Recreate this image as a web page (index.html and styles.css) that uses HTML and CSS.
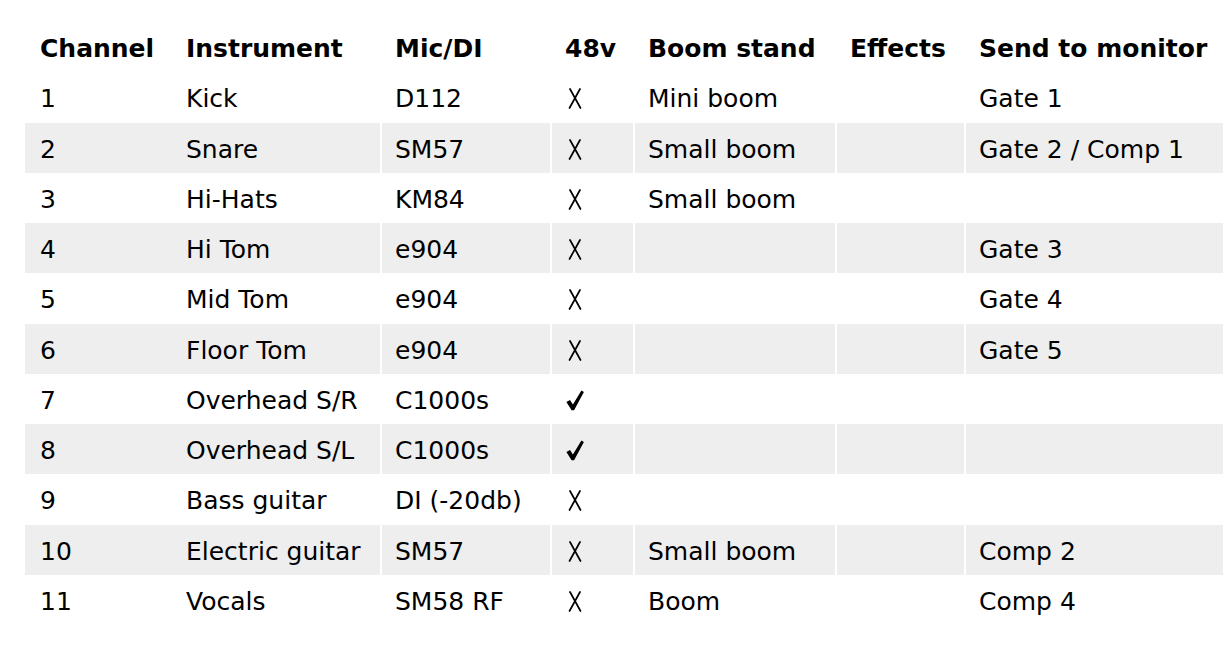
FILE: index.html
```html
<!DOCTYPE html>
<html>
<head>
<meta charset="utf-8">
<link rel="stylesheet" href="styles.css">
</head>
<body>
<div class="wrap">
<table class="channels">
  <colgroup>
    <col class="c1"><col class="c2"><col class="c3"><col class="c4"><col class="c5"><col class="c6"><col class="c7">
  </colgroup>
  <thead>
    <tr><th>Channel</th><th>Instrument</th><th>Mic/DI</th><th>48v</th><th>Boom stand</th><th>Effects</th><th>Send to monitor</th></tr>
  </thead>
  <tbody>
    <tr><td>1</td><td>Kick</td><td>D112</td><td class="mark"><svg class="no" viewBox="0 0 14 21" role="img" aria-label="no"><path d="M2 1 L12.5 20"/><path d="M12 1 L1.5 20"/></svg></td><td>Mini boom</td><td></td><td>Gate 1</td></tr>
    <tr><td>2</td><td>Snare</td><td>SM57</td><td class="mark"><svg class="no" viewBox="0 0 14 21" role="img" aria-label="no"><path d="M2 1 L12.5 20"/><path d="M12 1 L1.5 20"/></svg></td><td>Small boom</td><td></td><td>Gate 2 / Comp 1</td></tr>
    <tr><td>3</td><td>Hi-Hats</td><td>KM84</td><td class="mark"><svg class="no" viewBox="0 0 14 21" role="img" aria-label="no"><path d="M2 1 L12.5 20"/><path d="M12 1 L1.5 20"/></svg></td><td>Small boom</td><td></td><td></td></tr>
    <tr><td>4</td><td>Hi Tom</td><td>e904</td><td class="mark"><svg class="no" viewBox="0 0 14 21" role="img" aria-label="no"><path d="M2 1 L12.5 20"/><path d="M12 1 L1.5 20"/></svg></td><td></td><td></td><td>Gate 3</td></tr>
    <tr><td>5</td><td>Mid Tom</td><td>e904</td><td class="mark"><svg class="no" viewBox="0 0 14 21" role="img" aria-label="no"><path d="M2 1 L12.5 20"/><path d="M12 1 L1.5 20"/></svg></td><td></td><td></td><td>Gate 4</td></tr>
    <tr><td>6</td><td>Floor Tom</td><td>e904</td><td class="mark"><svg class="no" viewBox="0 0 14 21" role="img" aria-label="no"><path d="M2 1 L12.5 20"/><path d="M12 1 L1.5 20"/></svg></td><td></td><td></td><td>Gate 5</td></tr>
    <tr><td>7</td><td>Overhead S/R</td><td>C1000s</td><td class="mark"><svg class="yes" viewBox="0 0 18 21" role="img" aria-label="yes"><path d="M0.4 12 L4 10 L6.9 14.6 L15.4 0.5 L17.9 1.9 L8.1 20.2 L5.6 20.2 Z"/></svg></td><td></td><td></td><td></td></tr>
    <tr><td>8</td><td>Overhead S/L</td><td>C1000s</td><td class="mark"><svg class="yes" viewBox="0 0 18 21" role="img" aria-label="yes"><path d="M0.4 12 L4 10 L6.9 14.6 L15.4 0.5 L17.9 1.9 L8.1 20.2 L5.6 20.2 Z"/></svg></td><td></td><td></td><td></td></tr>
    <tr><td>9</td><td>Bass guitar</td><td>DI (-20db)</td><td class="mark"><svg class="no" viewBox="0 0 14 21" role="img" aria-label="no"><path d="M2 1 L12.5 20"/><path d="M12 1 L1.5 20"/></svg></td><td></td><td></td><td></td></tr>
    <tr><td>10</td><td>Electric guitar</td><td>SM57</td><td class="mark"><svg class="no" viewBox="0 0 14 21" role="img" aria-label="no"><path d="M2 1 L12.5 20"/><path d="M12 1 L1.5 20"/></svg></td><td>Small boom</td><td></td><td>Comp 2</td></tr>
    <tr><td>11</td><td>Vocals</td><td>SM58 RF</td><td class="mark"><svg class="no" viewBox="0 0 14 21" role="img" aria-label="no"><path d="M2 1 L12.5 20"/><path d="M12 1 L1.5 20"/></svg></td><td>Boom</td><td></td><td>Comp 4</td></tr>
  </tbody>
</table>
</div>
</body>
</html>
```

FILE: styles.css
```css
html, body {
  margin: 0;
  padding: 0;
  background: #fff;
  overflow: hidden;
}
.wrap {
  padding: 22px 0 0 25px;
}
.channels {
  table-layout: fixed;
  width: 1198px;
  border-collapse: separate;
  border-spacing: 0;
  font-family: "DejaVu Sans", Verdana, sans-serif;
  font-size: 25px;
  color: #000;
}
.c1 { width: 146px; }
.c2 { width: 209px; }
.c3 { width: 170px; }
.c4 { width: 83px; }
.c5 { width: 202px; }
.c6 { width: 129px; }
.c7 { width: 259px; }
.channels th,
.channels td {
  text-align: left;
  padding: 12px 0 8.25px 15px;
  line-height: 30px;
  height: 30px;
  white-space: nowrap;
  overflow: hidden;
}
.channels th {
  font-weight: bold;
}
.channels th:nth-child(n+3),
.channels td:nth-child(n+3) {
  border-left: 2px solid #fff;
  padding-left: 13px;
}
.channels tbody tr:nth-child(even) td {
  background: #eeeeee;
}
.channels td.mark {
  padding-left: 14px;
}
.no {
  width: 14px;
  height: 21px;
  vertical-align: -2px;
  margin-left: 2px;
  fill: none;
  stroke: #000;
  stroke-width: 1.7;
  stroke-linecap: round;
}
.yes {
  width: 18px;
  height: 21px;
  vertical-align: -2px;
  fill: #000;
}
```
